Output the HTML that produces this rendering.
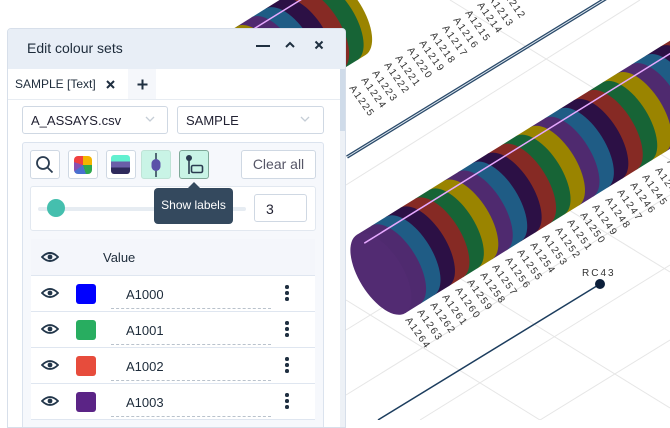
<!DOCTYPE html>
<html><head><meta charset="utf-8"><style>
*{margin:0;padding:0;box-sizing:border-box}
body{width:670px;height:420px;overflow:hidden;background:#fff;font-family:"Liberation Sans",sans-serif;position:relative}
.a{position:absolute}
#panel{left:7px;top:28px;width:339px;height:400px;background:#fff;border:1px solid #d7dfea;border-radius:4px 4px 0 0;overflow:hidden}
.hdr{left:0;top:0;width:339px;height:40px;background:#e8eef6}
.btn{width:30px;height:29px;border:1px solid #cfd8e3;border-radius:3px;background:#fff}
.sel{height:28px;border:1px solid #cfd8e3;border-radius:3px;background:#fff;font-size:13px;color:#223;padding:6px 8px}
.row{left:23px;width:284px;height:36px;border-top:1px solid #dfe6f0;background:#fff}
.sw{left:45px;top:8px;width:20px;height:20px;border-radius:3px}
.val{left:95px;top:11px;font-size:13px;color:#1d2b3a}
.dash{left:80px;top:32px;width:160px;border-top:1px dashed #b9c2cc}
.dots{left:254px;top:9px;width:4px}
.dots i{display:block;width:3.5px;height:3.5px;border-radius:50%;background:#1f2f40;margin-bottom:2.5px}
</style></head><body>
<svg class="a" style="left:0;top:0" width="670" height="420" viewBox="0 0 670 420">
<g stroke="#e6e6e6" stroke-width="1" fill="none">
<line x1="346" y1="330" x2="670" y2="130"/><line x1="346" y1="395" x2="670" y2="195"/>
<line x1="420" y1="420" x2="670" y2="265"/><line x1="540" y1="420" x2="670" y2="340"/>
<line x1="346" y1="300" x2="540" y2="420"/><line x1="430" y1="260" x2="670" y2="408"/>
<line x1="520" y1="180" x2="670" y2="272"/><line x1="590" y1="110" x2="670" y2="160"/>
<line x1="346" y1="185" x2="640" y2="0"/>
<line x1="450" y1="0" x2="670" y2="135"/>
</g>
<line x1="347" y1="157" x2="610" y2="-4" stroke="#2a4a6a" stroke-width="3.5"/>
<line x1="347" y1="157" x2="610" y2="-4" stroke="#dfe8f0" stroke-width="1"/>
<g transform="translate(333,21) rotate(-31.8)">
<path d="M-170 -46H-153A22 46 0 0 1 -153 46H-170Z" fill="#9a8400"/>
<path d="M0 -46H10A22 46 0 0 1 10 46H0Z" fill="#9a8400"/>
<path d="M-17 -46H0A22 46 0 0 1 0 46H-17Z" fill="#176436"/>
<path d="M-34 -46H-17A22 46 0 0 1 -17 46H-34Z" fill="#862a24"/>
<path d="M-51 -46H-34A22 46 0 0 1 -34 46H-51Z" fill="#2c1045"/>
<path d="M-68 -46H-51A22 46 0 0 1 -51 46H-68Z" fill="#1f5c85"/>
<path d="M-85 -46H-68A22 46 0 0 1 -68 46H-85Z" fill="#4f2a6f"/>
<path d="M-102 -46H-85A22 46 0 0 1 -85 46H-102Z" fill="#9a8400"/>
<path d="M-119 -46H-102A22 46 0 0 1 -102 46H-119Z" fill="#176436"/>
<path d="M-136 -46H-119A22 46 0 0 1 -119 46H-136Z" fill="#4f2a6f"/>
<line x1="-160" y1="-35" x2="20" y2="-35" stroke="#e6a8ff" stroke-width="1.5"/>
</g>
<g transform="translate(381,274) rotate(-31.8)">
<path d="M391 -46H408A22 46 0 0 1 408 46H391Z" fill="#9a8400"/>
<path d="M374 -46H391A22 46 0 0 1 391 46H374Z" fill="#176436"/>
<path d="M357 -46H374A22 46 0 0 1 374 46H357Z" fill="#862a24"/>
<path d="M340 -46H357A22 46 0 0 1 357 46H340Z" fill="#2c1045"/>
<path d="M323 -46H340A22 46 0 0 1 340 46H323Z" fill="#1f5c85"/>
<path d="M306 -46H323A22 46 0 0 1 323 46H306Z" fill="#4f2a6f"/>
<path d="M289 -46H306A22 46 0 0 1 306 46H289Z" fill="#9a8400"/>
<path d="M272 -46H289A22 46 0 0 1 289 46H272Z" fill="#176436"/>
<path d="M255 -46H272A22 46 0 0 1 272 46H255Z" fill="#862a24"/>
<path d="M238 -46H255A22 46 0 0 1 255 46H238Z" fill="#2c1045"/>
<path d="M221 -46H238A22 46 0 0 1 238 46H221Z" fill="#1f5c85"/>
<path d="M204 -46H221A22 46 0 0 1 221 46H204Z" fill="#4f2a6f"/>
<path d="M187 -46H204A22 46 0 0 1 204 46H187Z" fill="#9a8400"/>
<path d="M170 -46H187A22 46 0 0 1 187 46H170Z" fill="#176436"/>
<path d="M153 -46H170A22 46 0 0 1 170 46H153Z" fill="#862a24"/>
<path d="M136 -46H153A22 46 0 0 1 153 46H136Z" fill="#2c1045"/>
<path d="M119 -46H136A22 46 0 0 1 136 46H119Z" fill="#1f5c85"/>
<path d="M102 -46H119A22 46 0 0 1 119 46H102Z" fill="#4f2a6f"/>
<path d="M85 -46H102A22 46 0 0 1 102 46H85Z" fill="#9a8400"/>
<path d="M68 -46H85A22 46 0 0 1 85 46H68Z" fill="#176436"/>
<path d="M51 -46H68A22 46 0 0 1 68 46H51Z" fill="#862a24"/>
<path d="M34 -46H51A22 46 0 0 1 51 46H34Z" fill="#2c1045"/>
<path d="M17 -46H34A22 46 0 0 1 34 46H17Z" fill="#1f5c85"/>
<path d="M0 -46H17A22 46 0 0 1 17 46H0Z" fill="#4f2a6f"/>
<ellipse cx="0" cy="0" rx="22" ry="46" fill="#522b72"/>
<line x1="2" y1="-35" x2="420" y2="-35" stroke="#e6a8ff" stroke-width="1.5"/>
</g>
<g font-family="Liberation Sans, sans-serif" font-size="10" fill="#333" letter-spacing="1.5">
<text x="405" y="320" transform="rotate(55 405 320)">A1264</text>
<text x="417" y="312" transform="rotate(55 417 312)">A1263</text>
<text x="430" y="305" transform="rotate(55 430 305)">A1262</text>
<text x="442" y="297" transform="rotate(55 442 297)">A1261</text>
<text x="455" y="290" transform="rotate(55 455 290)">A1260</text>
<text x="467" y="282" transform="rotate(55 467 282)">A1259</text>
<text x="480" y="275" transform="rotate(55 480 275)">A1258</text>
<text x="492" y="267" transform="rotate(55 492 267)">A1257</text>
<text x="505" y="260" transform="rotate(55 505 260)">A1256</text>
<text x="517" y="252" transform="rotate(55 517 252)">A1255</text>
<text x="530" y="245" transform="rotate(55 530 245)">A1254</text>
<text x="542" y="237" transform="rotate(55 542 237)">A1253</text>
<text x="555" y="230" transform="rotate(55 555 230)">A1252</text>
<text x="567" y="222" transform="rotate(55 567 222)">A1251</text>
<text x="580" y="215" transform="rotate(55 580 215)">A1250</text>
<text x="592" y="207" transform="rotate(55 592 207)">A1249</text>
<text x="605" y="200" transform="rotate(55 605 200)">A1248</text>
<text x="617" y="192" transform="rotate(55 617 192)">A1247</text>
<text x="630" y="185" transform="rotate(55 630 185)">A1246</text>
<text x="642" y="177" transform="rotate(55 642 177)">A1245</text>
<text x="655" y="170" transform="rotate(55 655 170)">A1244</text>
<text x="667" y="162" transform="rotate(55 667 162)">A1243</text>
<text x="349" y="88" transform="rotate(55 349 88)">A1225</text>
<text x="361" y="80" transform="rotate(55 361 80)">A1224</text>
<text x="372" y="73" transform="rotate(55 372 73)">A1223</text>
<text x="384" y="65" transform="rotate(55 384 65)">A1222</text>
<text x="395" y="58" transform="rotate(55 395 58)">A1221</text>
<text x="407" y="50" transform="rotate(55 407 50)">A1220</text>
<text x="419" y="43" transform="rotate(55 419 43)">A1219</text>
<text x="430" y="35" transform="rotate(55 430 35)">A1218</text>
<text x="442" y="28" transform="rotate(55 442 28)">A1217</text>
<text x="453" y="20" transform="rotate(55 453 20)">A1216</text>
<text x="465" y="13" transform="rotate(55 465 13)">A1215</text>
<text x="477" y="5" transform="rotate(55 477 5)">A1214</text>
<text x="488" y="-2" transform="rotate(55 488 -2)">A1213</text>
<text x="500" y="-10" transform="rotate(55 500 -10)">A1212</text>
<text x="582" y="276" letter-spacing="2">RC43</text>
</g>
<line x1="600" y1="284" x2="378" y2="420" stroke="#1c3d5e" stroke-width="1.5"/>
<circle cx="600" cy="284" r="5" fill="#0c1f3a"/>
</svg>

<div id="panel" class="a">
 <div class="a hdr"></div>
 <div class="a" style="left:19px;top:11px;font-size:14px;color:#1d2b3a">Edit colour sets</div>
 <div class="a" style="left:248px;top:16px;width:14px;height:2px;background:#1f2f40"></div>
 <svg class="a" style="left:276px;top:11px" width="12" height="10"><path d="M2 7L6 3L10 7" stroke="#1f2f40" stroke-width="2" fill="none"/></svg>
 <svg class="a" style="left:306px;top:11px" width="10" height="10"><path d="M1.5 1.5L8.5 8.5M8.5 1.5L1.5 8.5" stroke="#1f2f40" stroke-width="2"/></svg>
 <div class="a" style="left:0;top:40px;width:120px;height:30px;background:#fff"></div>
 <div class="a" style="left:120px;top:40px;width:28px;height:30px;background:#f5f7fb"></div>
 <div class="a" style="left:7px;top:48px;font-size:12px;color:#1d2b3a">SAMPLE [Text]</div>
 <svg class="a" style="left:98px;top:51px" width="9" height="9"><path d="M1 1L8 8M8 1L1 8" stroke="#1f2f40" stroke-width="2"/></svg>
 <svg class="a" style="left:129px;top:50px" width="11" height="11"><path d="M5.5 0.5V10.5M0.5 5.5H10.5" stroke="#1f2f40" stroke-width="2"/></svg>
 <div class="a" style="left:0;top:70px;width:332px;border-top:1px solid #e7ecf2"></div>
 <div class="a" style="left:332px;top:40px;width:7px;height:360px;background:#edf1f6"></div>
 <div class="a" style="left:332px;top:40px;width:7px;height:62px;background:#cfdbe9"></div>

 <div class="a sel" style="left:14px;top:77px;width:146px">A_ASSAYS.csv</div>
 <svg class="a" style="left:137px;top:87px" width="10" height="7"><path d="M1 1L5 5L9 1" stroke="#c5cdd6" stroke-width="1.3" fill="none"/></svg>
 <div class="a sel" style="left:169px;top:77px;width:147px">SAMPLE</div>
 <svg class="a" style="left:292px;top:87px" width="10" height="7"><path d="M1 1L5 5L9 1" stroke="#c5cdd6" stroke-width="1.3" fill="none"/></svg>

 <div class="a" style="left:14px;top:113px;width:302px;height:300px;border:1px solid #dbe3ee;border-radius:3px;background:#f6f8fc"></div>
 <div class="a btn" style="left:22px;top:121px"></div>
 <svg class="a" style="left:27px;top:126px" width="20" height="20"><circle cx="8" cy="8" r="6" stroke="#2a3c50" stroke-width="1.8" fill="none"/><path d="M12.5 12.5L17.5 17.5" stroke="#2a3c50" stroke-width="1.8"/></svg>
 <div class="a btn" style="left:60px;top:121px"></div>
 <div class="a" style="left:66px;top:127px;width:18px;height:18px;border-radius:4px;background:conic-gradient(#f3b400 0 25%,#2ea84e 25% 45%,#4a70d0 45% 65%,#8a4fb0 65% 80%,#f04040 80% 100%)"></div>
 <div class="a btn" style="left:98px;top:121px"></div>
 <div class="a" style="left:103px;top:126px;width:19px;height:19px;border-radius:3px;overflow:hidden;background:linear-gradient(#62f0d0 0 35%,#6a5ea8 35% 66%,#2e2a5c 66%)"></div>
 <div class="a btn" style="left:133px;top:121px;background:#c9f4e6;border-color:#bfe3d6"></div>
 <svg class="a" style="left:140px;top:124px" width="16" height="24"><path d="M8 0V24" stroke="#2a3c50" stroke-width="1.5"/><rect x="3.5" y="6" width="9" height="12" rx="4.5" fill="#5a52a8"/></svg>
 <div class="a btn" style="left:171px;top:121px;background:#c9f4e6;border-color:#7fa898"></div>
 <svg class="a" style="left:177px;top:125px" width="20" height="22"><circle cx="4" cy="4" r="3" fill="#2a3c50"/><path d="M4 5V20" stroke="#2a3c50" stroke-width="1.6"/><rect x="6.5" y="11.5" width="11" height="7" rx="1.5" stroke="#2a3c50" stroke-width="1.6" fill="none"/></svg>
 <div class="a btn" style="left:233px;top:121px;width:75px;font-size:14px;color:#556;text-align:center;line-height:27px">Clear all</div>

 <div class="a" style="left:22px;top:157px;width:286px;height:45px;border:1px solid #e2e8f0;border-radius:3px;background:#fff"></div>
 <div class="a" style="left:30px;top:178px;width:208px;height:4px;border-radius:2px;background:#e6ecf2"></div>
 <div class="a" style="left:39px;top:170px;width:18px;height:18px;border-radius:50%;background:#45bfae"></div>
 <div class="a" style="left:246px;top:165px;width:53px;height:28px;border:1px solid #cfd8e3;border-radius:3px;background:#fff;font-size:14px;color:#223;padding:6px 11px">3</div>
 <div class="a" style="left:146px;top:159px;width:79px;height:36px;border-radius:4px;background:#34495e;color:#fff;font-size:12px;text-align:center;line-height:34px">Show labels</div>
 <div class="a" style="left:180px;top:153px;width:0;height:0;border-left:6px solid transparent;border-right:6px solid transparent;border-bottom:6px solid #34495e"></div>

 <div class="a" style="left:23px;top:210px;width:284px;height:36px;background:#f4f6fb"></div>
 <div class="a" style="left:95px;top:221px;font-size:13px;color:#1d2b3a">Value</div>

 <div class="a row" style="top:246px"><div class="a sw" style="background:#0000ff"></div><div class="a val">A1000</div><div class="a dash"></div><div class="a dots"><i></i><i></i><i></i></div></div>
 <div class="a row" style="top:282px"><div class="a sw" style="background:#28ad60"></div><div class="a val">A1001</div><div class="a dash"></div><div class="a dots"><i></i><i></i><i></i></div></div>
 <div class="a row" style="top:318px"><div class="a sw" style="background:#e74c3c"></div><div class="a val">A1002</div><div class="a dash"></div><div class="a dots"><i></i><i></i><i></i></div></div>
 <div class="a row" style="top:354px"><div class="a sw" style="background:#5b2486"></div><div class="a val">A1003</div><div class="a dash"></div><div class="a dots"><i></i><i></i><i></i></div></div>
 <div class="a" style="left:23px;top:390px;width:284px;border-top:1px solid #dfe6f0"></div>

 <svg class="a" style="left:33px;top:221px" width="18" height="180">
  <g fill="none" stroke="#22364a" stroke-width="1.8">
   <path d="M1 7Q9 -1 17 7Q9 15 1 7Z"/><path d="M1 43Q9 35 17 43Q9 51 1 43Z"/><path d="M1 79Q9 71 17 79Q9 87 1 79Z"/><path d="M1 115Q9 107 17 115Q9 123 1 115Z"/><path d="M1 151Q9 143 17 151Q9 159 1 151Z"/>
  </g>
  <g fill="#22364a"><circle cx="9" cy="7" r="2.4"/><circle cx="9" cy="43" r="2.4"/><circle cx="9" cy="79" r="2.4"/><circle cx="9" cy="115" r="2.4"/><circle cx="9" cy="151" r="2.4"/></g>
 </svg>
</div>
</body></html>
